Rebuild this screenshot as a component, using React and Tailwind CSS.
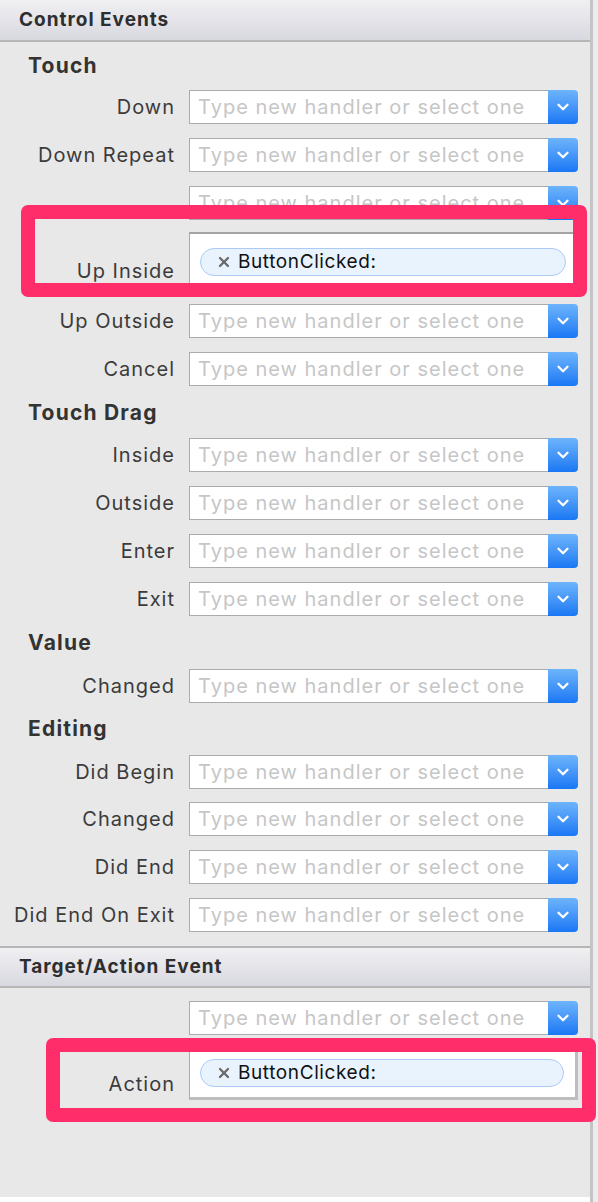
import { ChevronDown, X } from "lucide-react";

const font = { fontFamily: "Inter, 'Noto Sans', sans-serif" };

function SectionHeader({ title, top }) {
  return (
    <div
      className={`h-[42px] flex items-center pl-[19px] bg-gradient-to-b from-[#f0f0f3] to-[#d8d8e0] border-b-2 border-[#b6b6b6] ${top ? "border-t-2" : ""} text-[19px] tracking-[1px] font-bold text-[#2e2e2e]`}
    >
      {title}
    </div>
  );
}

function Heading({ children, className = "" }) {
  return (
    <div className={`h-[30px] flex items-center pl-[28px] text-[21px] tracking-[1.2px] font-bold text-[#333] ${className}`}>
      {children}
    </div>
  );
}

function Combo() {
  return (
    <div className="w-[389px] h-[34px] flex">
      <div className="flex-1 bg-white border border-[#ababab] border-r-0 flex items-center pl-[8px] text-[20px] tracking-[1px] text-[#c6c6c6] leading-none whitespace-nowrap overflow-hidden">
        Type new handler or select one
      </div>
      <div className="w-[30px] rounded-r-[4px] bg-gradient-to-b from-[#6db4fb] to-[#1877f4] flex items-center justify-center">
        <ChevronDown size={18} strokeWidth={3} className="text-white" />
      </div>
    </div>
  );
}

function Label({ children, className = "" }) {
  return (
    <div className={`w-[175px] text-right text-[20px] tracking-[1px] text-[#3b3b3b] leading-none whitespace-nowrap ${className}`}>
      {children}
    </div>
  );
}

function Row({ label, className = "" }) {
  return (
    <div className={`flex items-center ${className}`}>
      <Label>{label}</Label>
      <div className="ml-[14px]">
        <Combo />
      </div>
    </div>
  );
}

function TokenField({ shadow }) {
  return (
    <div
      className={`w-[389px] ${shadow ? "h-[54px] border-b-[3px] border-r-[3px] border-b-[#bdbdbd] border-r-[#bdbdbd]" : "h-[58px]"} bg-white border border-[#ababab] border-t-2 border-t-[#a3a3a3] flex items-center pl-[10px] pr-[11px]`}
    >
      <div className="flex-1 h-[28px] rounded-full bg-[#e9f3fe] border border-[#abcaf7] flex items-center pl-[15px] gap-[6px]">
        <X size={16} strokeWidth={3.5} className="text-[#6a6a6a]" />
        <span className="text-[19px] tracking-[0.6px] text-[#111] leading-none">ButtonClicked:</span>
      </div>
    </div>
  );
}

export default function App() {
  return (
    <div className="relative w-[598px] h-[1202px] bg-[#e8e8e8] flex" style={font}>
      <div className="w-[590px] flex flex-col border-b-[5px] border-white">
        <SectionHeader title="Control Events" />

        <Heading className="mt-[9px]">Touch</Heading>
        <Row label="Down" className="mt-[9px]" />
        <Row label="Down Repeat" className="mt-[14px]" />
        <Row label="" className="mt-[14px]" />
        <div className="flex items-end mt-[12px]">
          <Label className="pb-[9px]">Up Inside</Label>
          <div className="ml-[14px]">
            <TokenField />
          </div>
        </div>
        <Row label="Up Outside" className="mt-[14px]" />
        <Row label="Cancel" className="mt-[14px]" />

        <Heading className="mt-[12px]">Touch Drag</Heading>
        <Row label="Inside" className="mt-[10px]" />
        <Row label="Outside" className="mt-[14px]" />
        <Row label="Enter" className="mt-[14px]" />
        <Row label="Exit" className="mt-[14px]" />

        <Heading className="mt-[12px]">Value</Heading>
        <Row label="Changed" className="mt-[11px]" />

        <Heading className="mt-[11px]">Editing</Heading>
        <Row label="Did Begin" className="mt-[11px]" />
        <Row label="Changed" className="mt-[13px]" />
        <Row label="Did End" className="mt-[14px]" />
        <Row label="Did End On Exit" className="mt-[14px]" />

        <div className="mt-[14px]">
          <SectionHeader title="Target/Action Event" top />
        </div>
        <Row label="" className="mt-[13px]" />
        <div className="flex items-center mt-[11px]">
          <Label className="pt-[22px]">Action</Label>
          <div className="ml-[14px]">
            <TokenField shadow />
          </div>
        </div>
      </div>
      <div className="w-[3px] bg-[#c4c4c4]" />
      <div className="flex-1 bg-[#ececec]" />

      <div className="absolute left-[21px] top-[205px] w-[566px] h-[92px] border-[14px] border-[#ff2d6a] rounded-[7px]" />
      <div className="absolute left-[46px] top-[1038px] w-[550px] h-[84px] border-[14px] border-[#ff2d6a] rounded-[7px]" />
    </div>
  );
}
